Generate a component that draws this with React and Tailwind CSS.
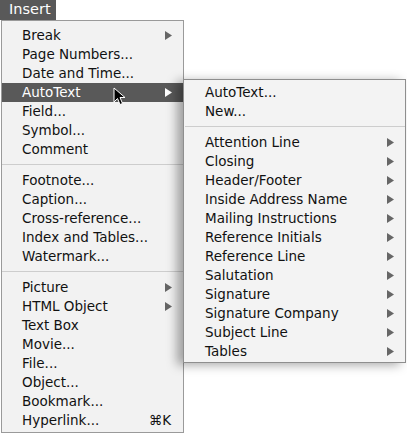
import React from "react";

const mainItems = [
  [
    { label: "Break", sub: true },
    { label: "Page Numbers..." },
    { label: "Date and Time..." },
    { label: "AutoText", sub: true, active: true },
    { label: "Field..." },
    { label: "Symbol..." },
    { label: "Comment" },
  ],
  [
    { label: "Footnote..." },
    { label: "Caption..." },
    { label: "Cross-reference..." },
    { label: "Index and Tables..." },
    { label: "Watermark..." },
  ],
  [
    { label: "Picture", sub: true },
    { label: "HTML Object", sub: true },
    { label: "Text Box" },
    { label: "Movie..." },
    { label: "File..." },
    { label: "Object..." },
    { label: "Bookmark..." },
    { label: "Hyperlink...", key: "⌘K" },
  ],
];

const autoTextItems = [
  [{ label: "AutoText..." }, { label: "New..." }],
  [
    "Attention Line",
    "Closing",
    "Header/Footer",
    "Inside Address Name",
    "Mailing Instructions",
    "Reference Initials",
    "Reference Line",
    "Salutation",
    "Signature",
    "Signature Company",
    "Subject Line",
    "Tables",
  ].map((label) => ({ label, sub: true })),
];

function Arrow({ light }) {
  return (
    <svg width="7" height="9" viewBox="0 0 7 9" className="shrink-0">
      <polygon points="0,0 7,4.5 0,9" fill={light ? "#ffffff" : "#666666"} />
    </svg>
  );
}

function Row({ item, arrowPad }) {
  return (
    <div
      className={`flex h-[19px] items-center justify-between pl-[20px] ${arrowPad} ${
        item.active ? "bg-[#595959] text-white" : "text-[#111]"
      }`}
    >
      <span className="whitespace-nowrap leading-none">{item.label}</span>
      {item.sub && <Arrow light={item.active} />}
      {item.key && <span className="mr-[1px] leading-none">{item.key}</span>}
    </div>
  );
}

function Separator() {
  return (
    <div className="pb-[6px] pt-[5px]">
      <div className="h-px bg-[#cdcdcd]" />
    </div>
  );
}

function Menu({ groups, className, arrowPad }) {
  return (
    <div className={className}>
      {groups.map((group, gi) => (
        <React.Fragment key={gi}>
          {gi > 0 && <Separator />}
          {group.map((item) => (
            <Row key={item.label} item={item} arrowPad={arrowPad} />
          ))}
        </React.Fragment>
      ))}
    </div>
  );
}

export default function App() {
  return (
    <div className="relative h-[434px] w-[407px] overflow-hidden bg-white text-[13.5px] font-['DejaVu_Sans',sans-serif]">
      <div className="flex h-[20px] w-[56px] items-center bg-[#595959] pl-[9px] text-[14.5px] text-white">
        Insert
      </div>
      <div className="flex items-start">
        <Menu
          groups={mainItems}
          arrowPad="pr-[11px]"
          className="ml-[1px] w-[183px] border border-[#9a9a9a] bg-[#f2f2f2] pb-[2px] pt-[5px]"
        />
        <Menu
          groups={autoTextItems}
          arrowPad="pr-[11px]"
          className="relative ml-[-1px] mt-[59px] w-[223px] border border-[#8e8e8e] bg-[#f3f3f3] pb-[1px] pl-[1px] pt-[3px] shadow-[-6px_2px_10px_rgba(0,0,0,0.35)]"
        />
      </div>
      <svg
        width="14"
        height="20"
        viewBox="0 0 14 20"
        className="absolute left-[113px] top-[87px]"
      >
        <polygon
          points="1,1 1,15 4.5,11.5 7,17.5 9.5,16.5 7,10.5 12,10.5"
          fill="#000"
          stroke="#fff"
          strokeWidth="1"
        />
      </svg>
    </div>
  );
}
